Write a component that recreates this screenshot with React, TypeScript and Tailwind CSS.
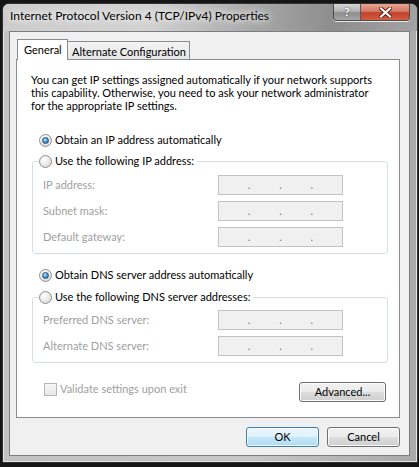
const ui = "font-['Lato','Noto_Sans',sans-serif] text-[11px] leading-[14px] text-black";

function Radio({ checked, label }: { checked?: boolean; label: string }) {
  return (
    <span className="flex h-[14px] items-center gap-[3px]">
      <span className="flex size-[13px] shrink-0 items-center justify-center rounded-full border border-[#8f9091] bg-[radial-gradient(circle_at_40%_35%,#ffffff_0%,#eeeeee_45%,#c9c9c9_100%)]">
        {checked ? (
          <span className="size-[7px] rounded-full border border-[#1f4f7f] bg-[radial-gradient(circle_at_40%_35%,#b6ecff_0%,#3d93d8_55%,#1b4f8a_100%)]" />
        ) : null}
      </span>
      <span className="whitespace-nowrap">{label}</span>
    </span>
  );
}

function IpBox() {
  return (
    <div className="flex h-[20px] w-[125px] items-center justify-evenly border border-[#c3c3c3] bg-[#f0f0f0] text-[#7a7a7a]">
      <span>.</span>
      <span>.</span>
      <span>.</span>
    </div>
  );
}

function IpRow({ label }: { label: string }) {
  return (
    <div className="flex items-center">
      <span className="w-[175px] text-[#a0a0a0]">{label}</span>
      <IpBox />
    </div>
  );
}

function Btn({ label, primary, className }: { label: string; primary?: boolean; className: string }) {
  return (
    <div
      className={
        primary
          ? `flex h-[20px] items-center justify-center rounded-[3px] border border-[#3c7fb1] bg-[linear-gradient(180deg,#edf7fd_0%,#dff2fc_48%,#c4e7fb_52%,#b1dcf3_100%)] shadow-[inset_0_0_0_1px_#f4fbff] ${className}`
          : `flex h-[20px] items-center justify-center rounded-[3px] border border-[#707070] bg-[linear-gradient(180deg,#f2f2f2_0%,#ebebeb_48%,#dddddd_52%,#cfcfcf_100%)] shadow-[inset_0_0_0_1px_#fbfbfb] ${className}`
      }
    >
      {label}
    </div>
  );
}

export default function App() {
  return (
    <div className={`h-[467px] w-[419px] overflow-hidden bg-[#151515] pl-[2px] pt-[3px] ${ui}`}>
      <div className="flex h-[460px] w-[416px] flex-col rounded-t-[7px] border border-[#333] bg-[linear-gradient(90deg,#c2c2c2_0%,#c6c6c6_60%,#a9a9a9_100%)] shadow-[inset_0_0_0_1px_#e2e2e2]">
        {/* title bar */}
        <div className="flex h-[27px] rounded-t-[6px] bg-[linear-gradient(90deg,#cdcdcd_0%,#d2d2d2_35%,#a6a6a6_62%,#8d8d8d_80%,#a3a3a3_100%)]">
          <div className="flex-1 pl-[7px] pt-[5px] text-[12px] whitespace-nowrap [text-shadow:0_0_6px_#ffffff,0_0_10px_#ffffff]">
            Internet Protocol Version 4 (TCP/IPv4) Properties
          </div>
          <div className="mr-[7px] flex h-[17px] self-start overflow-hidden rounded-b-[4px] border border-t-0 border-[#4b4b4b] shadow-[0_1px_0_#e8e8e8]">
            <div className="flex w-[27px] items-center justify-center border-r border-[#5a5a5a] bg-[linear-gradient(180deg,#d6d6d6_0%,#b4b4b4_45%,#8f8f8f_55%,#a5a5a5_100%)] text-[12px] font-bold leading-none text-white [text-shadow:0_0_2px_#333]">
              ?
            </div>
            <div className="flex w-[48px] items-center justify-center bg-[linear-gradient(180deg,#e8a593_0%,#d37b68_45%,#c3412b_55%,#d35d3f_100%)]">
              <svg width="13" height="11" viewBox="0 0 13 11">
                <path d="M2 1.5 L11 9.5 M11 1.5 L2 9.5" stroke="#5a1f15" strokeWidth="4" strokeLinecap="square" />
                <path d="M2 1.5 L11 9.5 M11 1.5 L2 9.5" stroke="#ffffff" strokeWidth="2.2" strokeLinecap="square" />
              </svg>
            </div>
          </div>
        </div>

        {/* client area */}
        <div className="ml-[6px] flex h-[425px] w-[401px] flex-col border border-[#7d7d7d] bg-[#f0f0f0] pl-[6px] pt-[7px]">
          <div className="flex h-[20px] items-end">
            <div className="relative z-10 -mb-px ml-[1px] flex h-[21px] w-[51px] items-center border border-b-0 border-[#898c95] bg-white pl-[6px]">
              General
            </div>
            <div className="flex h-[18px] w-[122px] items-center border border-b-0 border-l-0 border-[#898c95] bg-[linear-gradient(180deg,#f3f3f3_0%,#e6e6e6_100%)] pl-[4px] pt-[2px]">
              Alternate Configuration
            </div>
          </div>

          <div className="flex h-[359px] w-[384px] flex-col border border-[#898c95] bg-white">
            <p className="ml-[14px] mt-[13px] whitespace-nowrap leading-[13px]">
              You can get IP settings assigned automatically if your network supports
              <br />
              this capability. Otherwise, you need to ask your network administrator
              <br />
              for the appropriate IP settings.
            </p>

            <div className="ml-[22px] mt-[21px]">
              <Radio checked label="Obtain an IP address automatically" />
            </div>

            <fieldset className="ml-[15px] mt-[7px] w-[356px] rounded-[3px] border border-[#d5dfe5] pb-[6px]">
              <legend className="ml-[6px] pr-[3px]">
                <Radio label="Use the following IP address:" />
              </legend>
              <div className="mt-[7px] flex flex-col gap-[6px] pl-[10px]">
                <IpRow label="IP address:" />
                <IpRow label="Subnet mask:" />
                <IpRow label="Default gateway:" />
              </div>
            </fieldset>

            <div className="ml-[22px] mt-[14px]">
              <Radio checked label="Obtain DNS server address automatically" />
            </div>

            <fieldset className="ml-[15px] mt-[8px] w-[356px] rounded-[3px] border border-[#d5dfe5] pb-[6px]">
              <legend className="ml-[6px] pr-[3px]">
                <Radio label="Use the following DNS server addresses:" />
              </legend>
              <div className="mt-[6px] flex flex-col gap-[6px] pl-[10px]">
                <IpRow label="Preferred DNS server:" />
                <IpRow label="Alternate DNS server:" />
              </div>
            </fieldset>

            <div className="mr-[13px] mt-[19px] flex items-start justify-between">
              <div className="ml-[27px] flex items-center gap-[3px] text-[#a0a0a0]">
                <span className="size-[13px] border border-[#b5b5b5] bg-[linear-gradient(180deg,#f6f6f6,#e8e8e8)]" />
                <span>Validate settings upon exit</span>
              </div>
              <Btn label="Advanced..." className="w-[87px]" />
            </div>
          </div>

          <div className="mr-[9px] mt-[9px] flex justify-end gap-[8px]">
            <Btn label="OK" primary className="w-[73px]" />
            <Btn label="Cancel" className="w-[73px]" />
          </div>
        </div>
      </div>
    </div>
  );
}
